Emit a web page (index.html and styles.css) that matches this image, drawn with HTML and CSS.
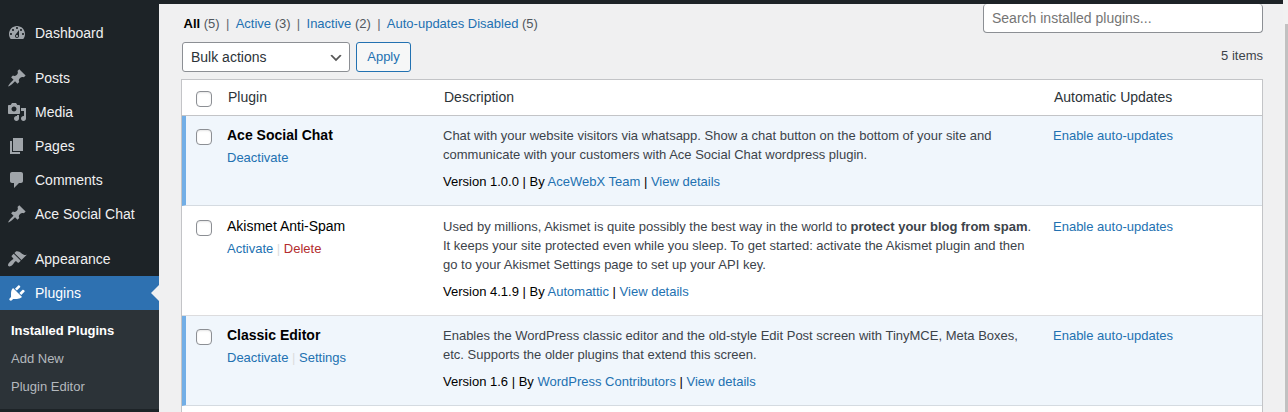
FILE: index.html
```html
<!DOCTYPE html>
<html lang="en">
<head>
<meta charset="utf-8">
<title>Plugins</title>
<link rel="stylesheet" href="styles.css">
</head>
<body>
<svg class="sprite" aria-hidden="true">
<symbol id="pin" viewBox="0 0 20 20"><path d="M10.44 3.02l1.82-1.82 6.36 6.35-1.83 1.82c-1.05-.68-2.48-.57-3.41.36l-.75.75c-.92.93-1.04 2.35-.35 3.41l-1.83 1.82-2.41-2.41-2.8 2.79c-.42.42-3.38 2.71-3.8 2.29s1.86-3.39 2.28-3.81l2.79-2.79L4.1 9.36l1.83-1.82c1.05.69 2.48.57 3.4-.36l.75-.75c.93-.92 1.05-2.35.36-3.41z"/></symbol>
</svg>
<div class="app">
<nav class="sidebar">
  <a class="item"><svg class="icon" viewBox="0 0 20 20"><path fill-rule="evenodd" d="M3.76 16h12.48c1.1-1.37 1.76-3.11 1.76-5 0-4.42-3.58-8-8-8s-8 3.58-8 8c0 1.89.66 3.63 1.76 5zM10 4c.55 0 1 .45 1 1s-.45 1-1 1-1-.45-1-1 .45-1 1-1zM6 6c.55 0 1 .45 1 1s-.45 1-1 1-1-.45-1-1 .45-1 1-1zM14 6c.55 0 1 .45 1 1s-.45 1-1 1-1-.45-1-1 .45-1 1-1zm-5.37 5.55L12 7v6c0 1.1-.9 2-2 2s-2-.9-2-2c0-.57.24-1.08.63-1.45zM4 10c.55 0 1 .45 1 1s-.45 1-1 1-1-.45-1-1 .45-1 1-1zm12 0c.55 0 1 .45 1 1s-.45 1-1 1-1-.45-1-1 .45-1 1-1zm-5 3c0-.55-.45-1-1-1s-1 .45-1 1 .45 1 1 1 1-.45 1-1z"/></svg>Dashboard</a>
  <a class="item group"><svg class="icon"><use href="#pin"/></svg>Posts</a>
  <a class="item"><svg class="icon" viewBox="0 0 20 20"><path fill-rule="evenodd" d="M13 11V4c0-.55-.45-1-1-1h-1.67L9 1H5L3.67 3H2c-.55 0-1 .45-1 1v7c0 .55.45 1 1 1h10c.55 0 1-.45 1-1zM7 4.5c1.38 0 2.5 1.12 2.5 2.5S8.38 9.5 7 9.5 4.5 8.38 4.5 7 5.62 4.5 7 4.5zM14 6h5v10.5c0 1.38-1.12 2.5-2.5 2.5S14 17.88 14 16.5s1.12-2.5 2.5-2.5c.17 0 .34.02.5.05V9h-3V6zm-4 8.05V13h2v3.5c0 1.38-1.12 2.5-2.5 2.5S7 17.88 7 16.5 8.12 14 9.5 14c.17 0 .34.02.5.05z"/></svg>Media</a>
  <a class="item"><svg class="icon" viewBox="0 0 20 20"><path d="M6 15V2h10v13H6zm-1 1h8v2H3V5h2v11z"/></svg>Pages</a>
  <a class="item"><svg class="icon" viewBox="0 0 20 20"><path d="M5 2h9c1.1 0 2 .9 2 2v7c0 1.1-.9 2-2 2h-2l-5 5v-5H5c-1.1 0-2-.9-2-2V4c0-1.1.9-2 2-2z"/></svg>Comments</a>
  <a class="item"><svg class="icon"><use href="#pin"/></svg>Ace Social Chat</a>
  <a class="item group"><svg class="icon" viewBox="0 0 20 20"><path d="M14.48 11.06L7.41 3.99l1.5-1.5c.5-.56 2.3-.47 3.51.32 1.21.8 1.43 1.28 2.91 2.1 1.18.64 2.45 1.26 4.45.85zm-.71.71L6.7 4.7 4.93 6.47c-.39.39-.39 1.02 0 1.41l1.06 1.06c.39.39.39 1.03 0 1.42-.6.6-1.43 1.11-2.21 1.69-.35.26-.7.53-1.01.84C1.43 14.23.4 16.08 1.4 17.07c.99 1 2.84-.03 4.18-1.36.31-.31.58-.66.85-1.02.57-.78 1.08-1.61 1.69-2.21.39-.39 1.02-.39 1.41 0l1.06 1.06c.39.39 1.02.39 1.41 0z"/></svg>Appearance</a>
  <a class="item current"><svg class="icon" viewBox="0 0 20 20"><path d="M13.11 4.36L9.87 7.6 8 5.73l3.24-3.24c.35-.34 1.05-.2 1.56.32.52.51.66 1.21.31 1.55zm-8 1.77l.91-1.12 9.01 9.01-1.19.84c-.71.71-2.63 1.16-3.82 1.16H6.14L4.9 17.26c-.59.59-1.54.59-2.12 0-.59-.58-.59-1.53 0-2.12l1.24-1.24v-3.88c0-1.13.4-3.19 1.09-3.89zm7.26 3.97l3.24-3.24c.34-.35 1.04-.21 1.55.31.52.51.66 1.21.31 1.55l-3.24 3.25z"/></svg>Plugins</a>
  <div class="submenu"><a class="selected">Installed Plugins</a><a>Add New</a><a>Plugin Editor</a></div>
</nav>
<div class="page">
  <div class="adminbar"></div>
  <main class="content">
    <div class="top">
      <div class="filters"><span><b>All</b> (5)</span><i>|</i><span><a>Active</a> (3)</span><i>|</i><span><a>Inactive</a> (2)</span><i>|</i><span><a>Auto-updates Disabled</a> (5)</span></div>
      <div class="search">Search installed plugins...</div>
    </div>
    <div class="actions">
      <div class="select">Bulk actions<svg class="chevron" viewBox="0 0 20 20"><path d="M5 6l5 5 5-5 2 1-7 7-7-7 2-1z"/></svg></div>
      <div class="button">Apply</div>
      <div class="count">5 items</div>
    </div>
    <div class="table">
      <div class="head"><div class="box"></div><div>Plugin</div><div>Description</div><div>Automatic Updates</div></div>
      <div class="row active">
        <div class="box"></div>
        <div><div class="name">Ace Social Chat</div><div class="links"><a>Deactivate</a></div></div>
        <div class="desc"><p>Chat with your website visitors via whatsapp. Show a chat button on the bottom of your site and<br>communicate with your customers with Ace Social Chat wordpress plugin.</p><p class="meta">Version 1.0.0 | By <a>AceWebX Team</a> | <a>View details</a></p></div>
        <div class="auto"><a>Enable auto-updates</a></div>
      </div>
      <div class="row">
        <div class="box"></div>
        <div><div class="name">Akismet Anti-Spam</div><div class="links"><a>Activate</a><em> | </em><a class="delete">Delete</a></div></div>
        <div class="desc"><p>Used by millions, Akismet is quite possibly the best way in the world to <b>protect your blog from spam</b>.<br>It keeps your site protected even while you sleep. To get started: activate the Akismet plugin and then<br>go to your Akismet Settings page to set up your API key.</p><p class="meta">Version 4.1.9 | By <a>Automattic</a> | <a>View details</a></p></div>
        <div class="auto"><a>Enable auto-updates</a></div>
      </div>
      <div class="row active">
        <div class="box"></div>
        <div><div class="name">Classic Editor</div><div class="links"><a>Deactivate</a><em> | </em><a>Settings</a></div></div>
        <div class="desc"><p>Enables the WordPress classic editor and the old-style Edit Post screen with TinyMCE, Meta Boxes,<br>etc. Supports the older plugins that extend this screen.</p><p class="meta">Version 1.6 | By <a>WordPress Contributors</a> | <a>View details</a></p></div>
        <div class="auto"><a>Enable auto-updates</a></div>
      </div>
      <div class="row next"></div>
    </div>
  </main>
</div>
<div class="scrollbar"><div class="thumb"></div></div>
</div>
</body>
</html>
```
FILE: styles.css
```css
* { box-sizing: border-box; }
body { margin: 0; overflow: hidden; background: #f0f0f1; color: #3c434a; font: 13px/19px "Liberation Sans", Arial, sans-serif; }
p { margin: 0; }
a { color: #2271b1; }
.sprite { display: none; }
.app { display: flex; width: 1288px; height: 412px; overflow: hidden; }

.sidebar { width: 159px; padding-top: 16px; background: #1d2327; }
.item { display: flex; align-items: center; gap: 8px; height: 34px; padding-left: 7px; color: #f0f0f1; font-size: 14px; }
.item.group { margin-top: 11px; }
.icon { width: 20px; height: 20px; fill: #a0a5aa; }
.item.current { position: relative; background: #2e71b1; color: #fff; }
.current .icon { fill: #fff; }
.item.current::after { content: ""; position: absolute; right: 0; top: 9px; border: 8px solid transparent; border-left-width: 0; border-right-color: #f0f0f1; }
.submenu { height: 99px; padding: 6px 11px; background: #2c3338; }
.submenu a { display: block; height: 28px; line-height: 29px; color: #b4b9be; }
.submenu .selected { color: #fff; font-weight: bold; }

.page { width: 1124px; }
.adminbar { height: 4px; background: #1d2327; }
.content { padding: 0 20px 0 23px; }
.top { display: flex; justify-content: space-between; height: 38px; }
.filters { display: flex; padding: 10px 0 0 1.5px; color: #50575e; }
.filters b { color: #000; }
.filters i { width: 16px; text-align: center; font-style: normal; color: #646970; }
.search { width: 280px; height: 29px; padding: 0 8px; border: 1px solid #8c8f94; border-top: 0; border-radius: 4px; background: #fff; color: #757575; font-size: 14px; line-height: 28px; }
.actions { display: flex; gap: 6px; height: 37px; }
.select { display: flex; justify-content: space-between; align-items: center; width: 168px; height: 30px; padding: 0 5px 0 8px; border: 1px solid #8c8f94; border-radius: 3px; background: #fff; color: #2c3338; font-size: 14px; }
.chevron { width: 16px; height: 16px; margin-top: 1px; fill: #555; }
.button { width: 55px; height: 30px; border: 1px solid #2271b1; border-radius: 3px; background: #f6f7f7; color: #2271b1; text-align: center; line-height: 28px; }
.count { margin-left: auto; padding-top: 4px; }

.table { width: 1082px; margin-left: -1px; border: 1px solid #c3c4c7; background: #fff; }
.head, .row { display: grid; grid-template-columns: 41px 216px 610px 1fr; padding-left: 4px; }
.head { height: 36px; border-bottom: 1px solid #c3c4c7; color: #2c3338; font-size: 14px; line-height: 34px; }
.head div:not(.box) { padding-left: 1px; }
.box { width: 16px; height: 16px; margin: 13px 0 0 10px; border: 1px solid #8c8f94; border-radius: 4px; background: #fff; box-shadow: inset 0 1px 2px rgba(0, 0, 0, .1); }
.head .box { margin-top: 11px; }
.row { height: 110px; padding-top: 1px; border-bottom: 1px solid #dcdcde; }
.row.active { height: 90px; padding-top: 0; padding-left: 0; border-left: 4px solid #72aee6; background: #f0f6fc; border-bottom-color: #d5dbe1; }
.row.next { height: 30px; }
.name { padding-top: 10px; font-size: 14px; color: #000; }
.active .name { font-weight: bold; }
.links { padding-top: 3px; }
.links em { font-style: normal; color: #ddd; }
.links .delete { color: #b32d2e; }
.desc, .auto { padding-top: 10px; }
.meta { margin-top: 8px; color: #000; }

.scrollbar { width: 5px; padding: 24px 0 0 2px; background: #f1f1f1; }
.thumb { height: 388px; background: #c1c1c1; }
```
